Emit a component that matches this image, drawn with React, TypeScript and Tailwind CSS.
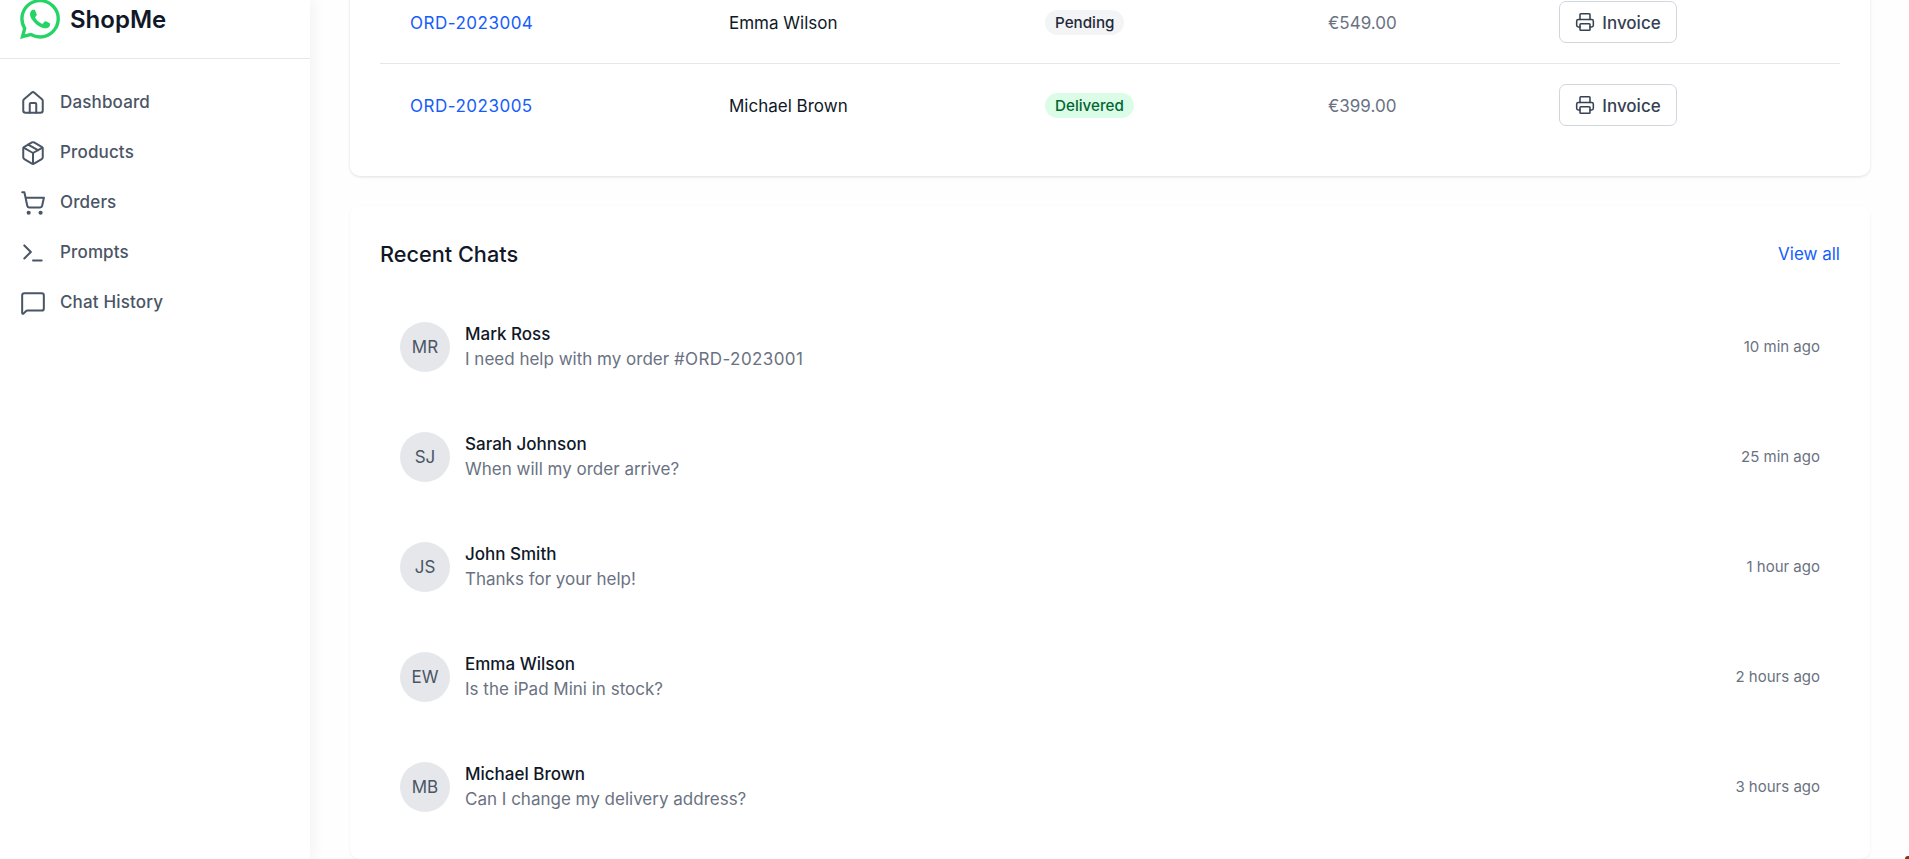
import { Home, Package, ShoppingCart, Terminal, MessageSquare, Printer } from 'lucide-react'
import { SiWhatsapp } from 'react-icons/si'

const nav = [
  { label: 'Dashboard', icon: Home },
  { label: 'Products', icon: Package },
  { label: 'Orders', icon: ShoppingCart },
  { label: 'Prompts', icon: Terminal },
  { label: 'Chat History', icon: MessageSquare },
]

const orders = [
  { id: 'ORD-2023004', name: 'Emma Wilson', status: 'Pending', total: '€549.00' },
  { id: 'ORD-2023005', name: 'Michael Brown', status: 'Delivered', total: '€399.00' },
]

const chats = [
  { initials: 'MR', name: 'Mark Ross', text: 'I need help with my order ', order: '#ORD-2023001', time: '10 min ago' },
  { initials: 'SJ', name: 'Sarah Johnson', text: 'When will my order arrive?', time: '25 min ago' },
  { initials: 'JS', name: 'John Smith', text: 'Thanks for your help!', time: '1 hour ago' },
  { initials: 'EW', name: 'Emma Wilson', text: 'Is the iPad Mini in stock?', time: '2 hours ago' },
  { initials: 'MB', name: 'Michael Brown', text: 'Can I change my delivery address?', time: '3 hours ago' },
]

export default function App() {
  return (
    <div className="relative flex h-screen overflow-hidden bg-white font-['Inter',sans-serif]">
      <aside className="z-10 w-[310px] shrink-0 bg-white shadow-[2px_0_14px_rgba(0,0,0,0.06)]">
        <div className="-mt-[1px] flex h-[60px] items-start gap-[10px] border-b border-gray-200 pl-[20px]">
          <SiWhatsapp className="h-[40px] w-[40px] text-[#25d366]" />
          <span className="pt-[1px] text-[24px] leading-[40px] font-semibold text-gray-900">ShopMe</span>
        </div>
        <nav className="mt-[19px] flex flex-col">
          {nav.map((item) => (
            <a key={item.label} className="flex h-[50px] items-center gap-[14px] pl-[20px] text-[17px] font-[450] tracking-[0.15px] text-gray-600">
              <item.icon className="h-[26px] w-[26px] text-gray-600" strokeWidth={1.85} />
              {item.label}
            </a>
          ))}
        </nav>
      </aside>

      <main className="min-w-0 flex-1 bg-[#fefefe] pr-[39px] pl-[40px]">
        <section className="-mt-[19px] rounded-[10px] bg-white px-[30px] pb-[30px] shadow-[0_1px_3px_rgba(0,0,0,0.12)]">
          {orders.map((o, i) => (
            <div
              key={o.id}
              className={`grid grid-cols-[319px_316px_283px_231px_1fr] items-center text-[17px] ${i === 0 ? 'h-[83px] border-b border-gray-200' : 'h-[82px]'}`}
            >
              <a className="mt-[4px] pl-[30px] tracking-[0.5px] text-blue-600">{o.id}</a>
              <span className="mt-[4px] pl-[30px] text-gray-900">{o.name}</span>
              <span className="mt-[1px] pl-[30px]">
                <span className={`inline-block rounded-full px-[10px] text-[15.2px] leading-[25px] font-medium ${o.status === 'Pending' ? 'bg-gray-100 text-gray-800' : 'bg-green-100 text-green-800'}`}>
                  {o.status}
                </span>
              </span>
              <span className="mt-[4px] pl-[30px] text-gray-500">{o.total}</span>
              <span className="pl-[30px]">
                <button className="flex h-[42px] w-[118px] items-center justify-center gap-[7px] rounded-[7px] border border-gray-300 bg-white text-[17px] font-[450] text-gray-700">
                  <Printer className="h-[20px] w-[20px]" strokeWidth={1.85} />
                  <span className="pt-[3px]">Invoice</span>
                </button>
              </span>
            </div>
          ))}
        </section>

        <section className="mt-[30px] rounded-[10px] bg-white px-[30px] pt-[32px] pb-[17px] shadow-[0_1px_3px_rgba(0,0,0,0.06)]">
          <div className="flex items-center justify-between">
            <h2 className="text-[21.7px] font-medium text-gray-900">Recent Chats</h2>
            <a className="text-[17px] text-blue-600">View all</a>
          </div>
          <ul className="mt-[21px]">
            {chats.map((c) => (
              <li key={c.name} className="flex h-[110px] items-center px-[20px]">
                <div className="flex h-[50px] w-[50px] shrink-0 items-center justify-center rounded-full bg-gray-200 pt-[2px] text-[17px] text-gray-600">
                  {c.initials}
                </div>
                <div className="ml-[15px] min-w-0 flex-1">
                  <p className="text-[17px] leading-[25px] font-[450] text-gray-900">{c.name}</p>
                  <p className="text-[17px] leading-[25px] text-gray-500">
                    {c.text}
                    {c.order && <span className="tracking-[0.4px]">{c.order}</span>}
                  </p>
                </div>
                <span className="pt-[2px] text-[15px] text-gray-500">{c.time}</span>
              </li>
            ))}
          </ul>
        </section>
      </main>

      <div className="absolute right-0 bottom-0 h-[3px] w-[4px] rounded-tl-[3px] bg-[#8f2f14]" />
    </div>
  )
}
